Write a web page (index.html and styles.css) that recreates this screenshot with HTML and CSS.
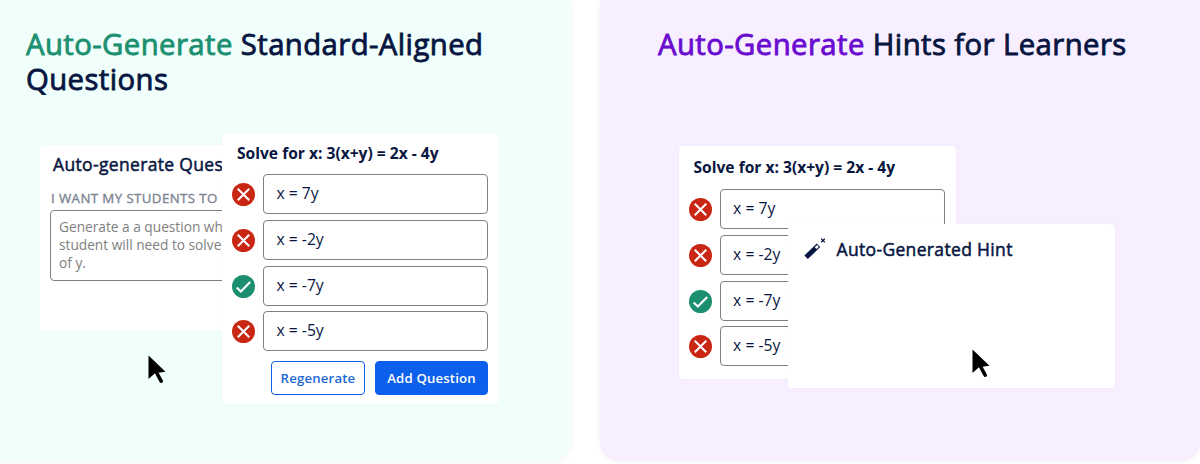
FILE: index.html
```html
<!DOCTYPE html>
<html lang="en">
<head>
<meta charset="utf-8">
<title>Auto-Generate</title>
<link rel="stylesheet" href="styles.css">
</head>
<body>
<svg class="defs" width="0" height="0" aria-hidden="true">
  <symbol id="wrong" viewBox="0 0 24 24"><circle cx="12" cy="12" r="12" fill="#c92613"/><path d="M6 6 18 18M18 6 6 18" stroke="#fff" stroke-width="2.2" fill="none"/></symbol>
  <symbol id="right" viewBox="0 0 24 24"><circle cx="12" cy="12" r="12" fill="#1c8f70"/><path d="M4.9 13 9.2 17.2 19 7.4" stroke="#fff" stroke-width="2.2" fill="none"/></symbol>
  <symbol id="pointer" viewBox="0 0 18 30"><path d="M.5 .5V24L7 18.2 17.5 16.7Z" fill="#000"/><path d="M8.5 17.5 13.2 26.2" stroke="#000" stroke-width="3.6" stroke-linecap="round"/></symbol>
</svg>
<main class="page">
  <section class="panel panel-questions">
    <h2 class="heading"><span class="green">Auto-Generate</span> Standard-Aligned<br>Questions</h2>
    <div class="card prompt-card">
      <h3 class="card-title">Auto-generate Questions</h3>
      <p class="label">I WANT MY STUDENTS TO</p>
      <div class="textarea">Generate a a question wh<br>student will need to solve<br>of y.</div>
    </div>
    <div class="card quiz-card quiz-main">
      <h3 class="quiz-title">Solve for x: 3(x+y) = 2x - 4y</h3>
      <ul class="answers">
        <li class="row"><svg class="mark"><use href="#wrong"/></svg><span class="answer">x = 7y</span></li>
        <li class="row"><svg class="mark"><use href="#wrong"/></svg><span class="answer">x = -2y</span></li>
        <li class="row"><svg class="mark"><use href="#right"/></svg><span class="answer">x = -7y</span></li>
        <li class="row"><svg class="mark"><use href="#wrong"/></svg><span class="answer">x = -5y</span></li>
      </ul>
      <div class="actions"><span class="btn outline">Regenerate</span><span class="btn solid">Add Question</span></div>
    </div>
    <svg class="cursor cursor-questions"><use href="#pointer"/></svg>
  </section>
  <section class="panel panel-hints">
    <h2 class="heading"><span class="purple">Auto-Generate</span> Hints for Learners</h2>
    <div class="card quiz-card quiz-back">
      <h3 class="quiz-title">Solve for x: 3(x+y) = 2x - 4y</h3>
      <ul class="answers">
        <li class="row"><svg class="mark"><use href="#wrong"/></svg><span class="answer">x = 7y</span></li>
        <li class="row"><svg class="mark"><use href="#wrong"/></svg><span class="answer">x = -2y</span></li>
        <li class="row"><svg class="mark"><use href="#right"/></svg><span class="answer">x = -7y</span></li>
        <li class="row"><svg class="mark"><use href="#wrong"/></svg><span class="answer">x = -5y</span></li>
      </ul>
    </div>
    <div class="card hint-card">
      <svg class="wand" viewBox="0 0 22 22"><path d="M2.1 19.3 14.5 7.3" stroke="#071641" stroke-width="5"/><path d="M11.6 10.1 14 7.8" stroke="#fff" stroke-width="2.4"/><path d="M17.2 .8 20.8 4.2M20.8 .8 17.2 4.2" stroke="#071641" stroke-width="1.2"/></svg>
      <h3 class="hint-title">Auto-Generated Hint</h3>
    </div>
    <svg class="cursor cursor-hints"><use href="#pointer"/></svg>
  </section>
</main>
</body>
</html>
```
FILE: styles.css
```css
* { box-sizing: border-box; margin: 0; padding: 0; }
body { width: 1200px; height: 464px; overflow: hidden; background: #fff; color: #071641; font-family: "Open Sans", sans-serif; }
.defs { position: absolute; }
.page { display: flex; gap: 29px; height: 461px; }
.panel { position: relative; height: 461px; border-radius: 0 0 20px 20px; box-shadow: 0 0 7px rgba(0,0,0,.06); }
.panel-questions { width: 571px; padding: 27px 0 0 26px; background: #f0fffc; border-bottom-left-radius: 0; }
.panel-hints { width: 600px; padding: 27px 0 0 58px; background: #f7efff; }
.heading { font-size: 29.3px; line-height: 35px; font-weight: 400; letter-spacing: .42px; -webkit-text-stroke: .85px currentColor; white-space: nowrap; }
.green { color: #1c9070; }
.purple { color: #6a0bd0; }
.card { position: absolute; background: #fff; border-radius: 4px; box-shadow: 0 0 2px rgba(0,0,0,.05); }
.prompt-card { left: 40px; top: 145px; width: 250px; height: 186px; padding: 7px 0 0 10px; overflow: hidden; white-space: nowrap; }
.card-title, .hint-title { font-size: 17.5px; line-height: 24px; font-weight: 400; letter-spacing: .34px; -webkit-text-stroke: .5px currentColor; white-space: nowrap; }
.card-title { margin-left: 3px; }
.label { margin: 12px 0 2px 1px; font-size: 13.3px; line-height: 20px; letter-spacing: .39px; -webkit-text-stroke: .35px currentColor; color: #7c8492; }
.textarea { height: 71px; padding: 7px 8px; border: 1px solid #808080; border-radius: 4px; font-size: 13.7px; line-height: 18px; color: #808080; }
.quiz-card { width: 277px; padding: 8px 11px 0 11px; }
.quiz-main { left: 222px; top: 133px; height: 271px; }
.quiz-back { left: 78px; top: 146px; height: 233px; padding-top: 9px; }
.quiz-title { margin: 0 0 9px 4px; font-size: 15.6px; line-height: 24px; font-weight: 700; white-space: nowrap; }
.quiz-back .quiz-title { margin-bottom: 10px; margin-left: 3.5px; }
.answers { display: grid; gap: 5.8px; list-style: none; }
.quiz-back .answers { margin-left: -.4px; margin-right: .4px; }
.row { display: flex; align-items: center; height: 40px; }
.mark { width: 23px; height: 23px; margin: 1px 8px 0 -1px; }
.answer { flex: 1; height: 40px; padding-left: 12.5px; border: 1px solid #808080; border-radius: 4px; font-size: 15.7px; line-height: 36px; }
.actions { display: flex; justify-content: flex-end; gap: 10px; margin-top: 10px; }
.btn { height: 34px; border: 1px solid #0d60ec; border-radius: 4px; font-size: 13.2px; line-height: 32px; font-weight: 600; letter-spacing: .17px; text-align: center; white-space: nowrap; }
.outline { width: 94px; color: #1c67d6; }
.solid { width: 113px; color: #fff; background: #0d60ec; }
.hint-card { left: 187.5px; top: 224px; width: 327px; height: 164px; display: flex; gap: 11px; padding: 13px 16px; align-items: flex-start; }
.wand { width: 22px; height: 22px; margin-top: 1px; }
.cursor { position: absolute; width: 18px; height: 30px; }
.cursor-questions { left: 148px; top: 355px; }
.cursor-hints { left: 372px; top: 349px; }
.quiz-back { left: 79px; }
```
